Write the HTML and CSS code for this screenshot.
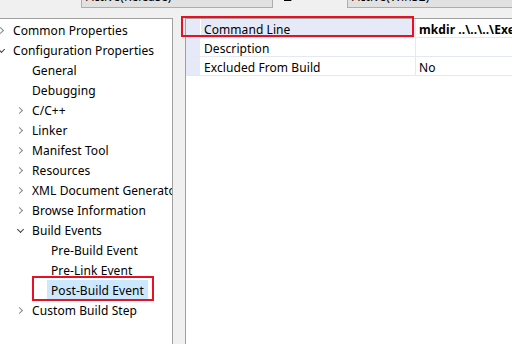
FILE: index.html
```html
<!DOCTYPE html>
<html lang="en">
<head>
    <meta charset="UTF-8">
    <title>Property Pages</title>
    <link rel="stylesheet" href="styles.css">
</head>
<body>
    <div class="page">
        <!-- Configuration / Platform bar -->
        <div class="topbar">
            <span class="label label-config">Configuration:</span>
            <div class="combo combo-config">Active(Release)</div>
            <span class="label label-platform"><u>P</u>latform:</span>
            <div class="combo combo-platform">Active(Win32)</div>
        </div>

        <div class="main">
            <!-- Property tree -->
            <div class="tree">
                <div class="node lvl1"><span class="arrow closed"></span><span class="text">Common Properties</span></div>
                <div class="node lvl1"><span class="arrow open"></span><span class="text">Configuration Properties</span></div>
                <div class="node lvl2"><span class="arrow"></span><span class="text">General</span></div>
                <div class="node lvl2"><span class="arrow"></span><span class="text">Debugging</span></div>
                <div class="node lvl2"><span class="arrow closed"></span><span class="text">C/C++</span></div>
                <div class="node lvl2"><span class="arrow closed"></span><span class="text">Linker</span></div>
                <div class="node lvl2"><span class="arrow closed"></span><span class="text">Manifest Tool</span></div>
                <div class="node lvl2"><span class="arrow closed"></span><span class="text">Resources</span></div>
                <div class="node lvl2"><span class="arrow closed"></span><span class="text">XML Document Generator</span></div>
                <div class="node lvl2"><span class="arrow closed"></span><span class="text">Browse Information</span></div>
                <div class="node lvl2"><span class="arrow open"></span><span class="text">Build Events</span></div>
                <div class="node lvl3"><span class="arrow"></span><span class="text">Pre-Build Event</span></div>
                <div class="node lvl3"><span class="arrow"></span><span class="text">Pre-Link Event</span></div>
                <div class="node lvl3 selected"><span class="arrow"></span><span class="text">Post-Build Event</span></div>
                <div class="node lvl2"><span class="arrow closed"></span><span class="text">Custom Build Step</span></div>
            </div>

            <!-- Property grid -->
            <div class="grid">
                <div class="row active">
                    <div class="gutter"></div>
                    <div class="name">Command Line</div>
                    <div class="value bold">mkdir ..\..\..\Exe\$(Configuration)</div>
                </div>
                <div class="row">
                    <div class="gutter"></div>
                    <div class="name">Description</div>
                    <div class="value"></div>
                </div>
                <div class="row">
                    <div class="gutter"></div>
                    <div class="name">Excluded From Build</div>
                    <div class="value">No</div>
                </div>
            </div>
        </div>
    </div>
</body>
</html>
```

FILE: styles.css
```css
body {
    margin: 0;
    background: #f0f0f0;
    font-family: "Noto Sans", "Noto Sans CJK SC", sans-serif;
    font-size: 12px;
    letter-spacing: 0.08px;
    color: #000;
}
.page {
    width: 512px;
    height: 344px;
    overflow: hidden;
}
.topbar {
    height: 18px;
    display: flex;
    align-items: flex-start;
    overflow: hidden;
}
.label {
    flex: none;
    margin-top: -13px;
    line-height: 16px;
    white-space: nowrap;
}
.label-config {
    margin-left: -57px;
    width: 138px;
}
.label-platform {
    margin-left: 11px;
    width: 63px;
}
.combo {
    flex: none;
    margin-top: -14px;
    height: 20px;
    line-height: 20px;
    padding-left: 4px;
    background: #e1e1e1;
    border: 1px solid #adadad;
    white-space: nowrap;
}
.combo-config {
    width: 186px;
}
.combo-platform {
    flex: 1;
    margin-right: -4px;
}
.main {
    display: flex;
    height: 326px;
}
.tree {
    flex: none;
    width: 172px;
    background: #fff;
    border-top: 1px solid #a0a0a0;
    border-right: 1px solid #a0a0a0;
    padding-top: 1px;
    overflow: hidden;
}
.node {
    height: 20px;
    display: flex;
    align-items: flex-start;
    white-space: nowrap;
    position: relative;
    margin-left: -6px;
}
.lvl2 { padding-left: 19px; }
.lvl3 { padding-left: 38px; }
.arrow {
    width: 19px;
    height: 20px;
    flex: none;
    position: relative;
}
.arrow.closed::before,
.arrow.open::before {
    content: "";
    position: absolute;
    width: 4px;
    height: 4px;
    border-right: 1.5px solid #8a8a8a;
    border-bottom: 1.5px solid #8a8a8a;
}
.arrow.closed::before {
    left: 4px;
    top: 8px;
    transform: rotate(-45deg);
}
.arrow.open::before {
    left: 5px;
    top: 7px;
    transform: rotate(45deg);
    border-color: #404040;
}
.node .text {
    padding: 2px 4px 0;
    line-height: 17px;
    margin-left: -4px;
}
.node.selected .text {
    background: #cce8ff;
    height: 17px;
}
.node.selected::after {
    content: "";
    position: absolute;
    left: 38px;
    top: -4px;
    width: 118px;
    height: 21px;
    border: 2px solid #e81123;
}
.grid {
    flex: 1;
    min-width: 0;
    margin-left: 12px;
    background: #fff;
    border-top: 1px solid #a0a0a0;
    border-left: 1px solid #a0a0a0;
}
.row {
    display: flex;
    height: 18px;
    border-bottom: 1px solid #e4e7f4;
    position: relative;
}
.gutter {
    flex: none;
    width: 14px;
    background: #e6e9f7;
    border-right: 1px solid #fff;
}
.name {
    flex: none;
    width: 211px;
    height: 18px;
    padding-left: 3px;
    line-height: 22px;
    border-right: 1px solid #e4e7f4;
    white-space: nowrap;
}
.row.active .name {
    background: #e6e9f7;
}
.row.active::after {
    content: "";
    position: absolute;
    left: -5px;
    top: -3px;
    width: 229px;
    height: 17px;
    border: 2px solid #e81123;
}
.value {
    flex: 1;
    height: 18px;
    padding-left: 3px;
    line-height: 22px;
    white-space: nowrap;
    overflow: hidden;
}
.bold {
    font-weight: bold;
}
```
